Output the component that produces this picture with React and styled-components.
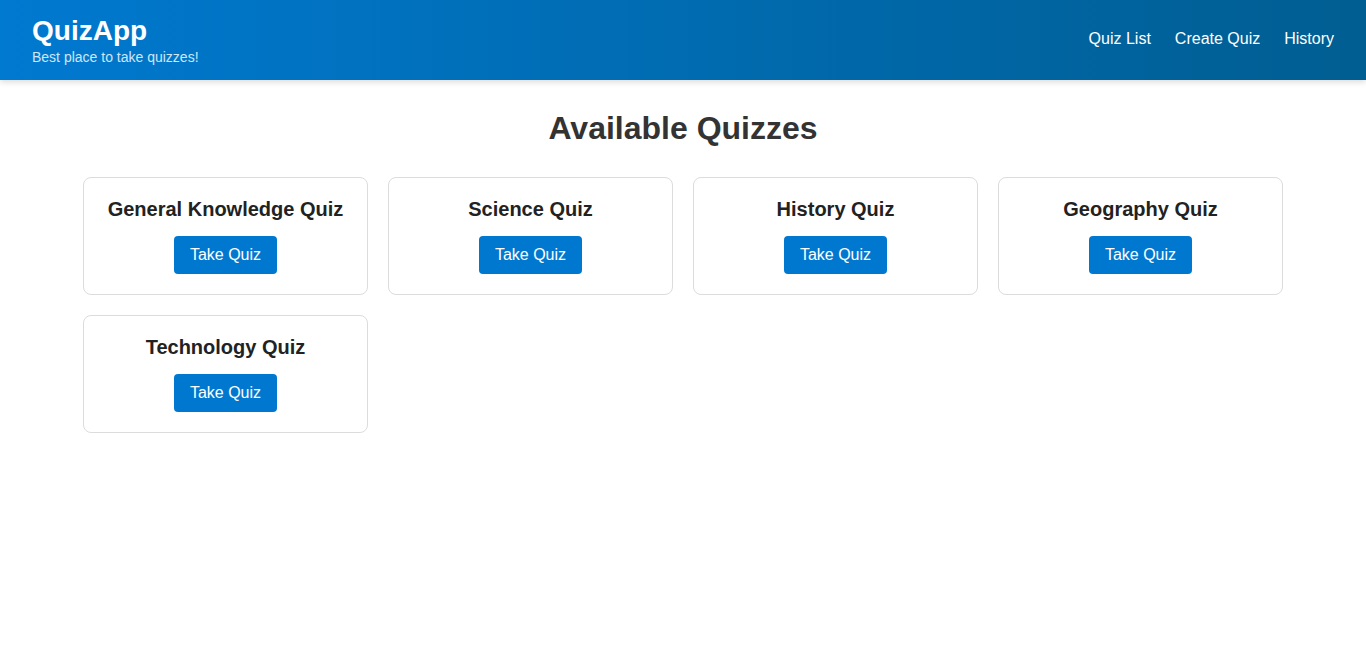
import React from "react";
import styled, { createGlobalStyle } from "styled-components";

const GlobalStyle = createGlobalStyle`
  html, body { margin: 0; padding: 0; background: #ffffff; }
  body { font-family: "Liberation Sans", Arial, sans-serif; color: #333; }
  * { box-sizing: border-box; }
`;

const Header = styled.header`
  height: 80px;
  padding: 0 32px;
  display: flex;
  align-items: center;
  justify-content: space-between;
  background: linear-gradient(90deg, #0079d0 0%, #005e92 100%);
  box-shadow: 0 2px 6px rgba(0, 0, 0, 0.15);
  color: #fff;
`;

const Brand = styled.div`
  display: flex;
  flex-direction: column;
  margin-top: -1px;
`;

const Logo = styled.h1`
  margin: 0;
  font-size: 28px;
  font-weight: 700;
  line-height: 32px;
`;

const Tagline = styled.p`
  margin: 2px 0 0;
  font-size: 14px;
  line-height: 16px;
  color: #cfe6f7;
`;

const Nav = styled.nav`
  display: flex;
  gap: 24px;
  margin-top: -2px;
`;

const NavLink = styled.a`
  color: #fff;
  font-size: 16px;
  text-decoration: none;
  cursor: pointer;
`;

const Main = styled.main`
  max-width: 1200px;
  margin: 0 auto;
  padding-top: 30px;
`;

const Title = styled.h2`
  margin: 0 0 30px;
  text-align: center;
  font-size: 32px;
  line-height: 37px;
  font-weight: 700;
  color: #333;
`;

const Grid = styled.div`
  display: grid;
  grid-template-columns: repeat(4, 1fr);
  gap: 20px;
`;

const Card = styled.div`
  border: 1px solid #dcdcdc;
  border-radius: 8px;
  padding: 20px;
  display: flex;
  flex-direction: column;
  align-items: center;
  background: #fff;
`;

const CardTitle = styled.h3`
  margin: 0 0 15px;
  font-size: 20px;
  line-height: 23px;
  font-weight: 700;
  color: #222;
  text-align: center;
`;

const Button = styled.button`
  height: 38px;
  padding: 0 16px;
  border: none;
  border-radius: 4px;
  background: #0078cf;
  color: #fff;
  font-family: "Liberation Sans", Arial, sans-serif;
  font-size: 16px;
  cursor: pointer;
`;

const quizzes = [
  "General Knowledge Quiz",
  "Science Quiz",
  "History Quiz",
  "Geography Quiz",
  "Technology Quiz",
];

export default function App() {
  return (
    <>
      <GlobalStyle />
      <Header>
        <Brand>
          <Logo>QuizApp</Logo>
          <Tagline>Best place to take quizzes!</Tagline>
        </Brand>
        <Nav>
          <NavLink>Quiz List</NavLink>
          <NavLink>Create Quiz</NavLink>
          <NavLink>History</NavLink>
        </Nav>
      </Header>
      <Main>
        <Title>Available Quizzes</Title>
        <Grid>
          {quizzes.map((q) => (
            <Card key={q}>
              <CardTitle>{q}</CardTitle>
              <Button>Take Quiz</Button>
            </Card>
          ))}
        </Grid>
      </Main>
    </>
  );
}
